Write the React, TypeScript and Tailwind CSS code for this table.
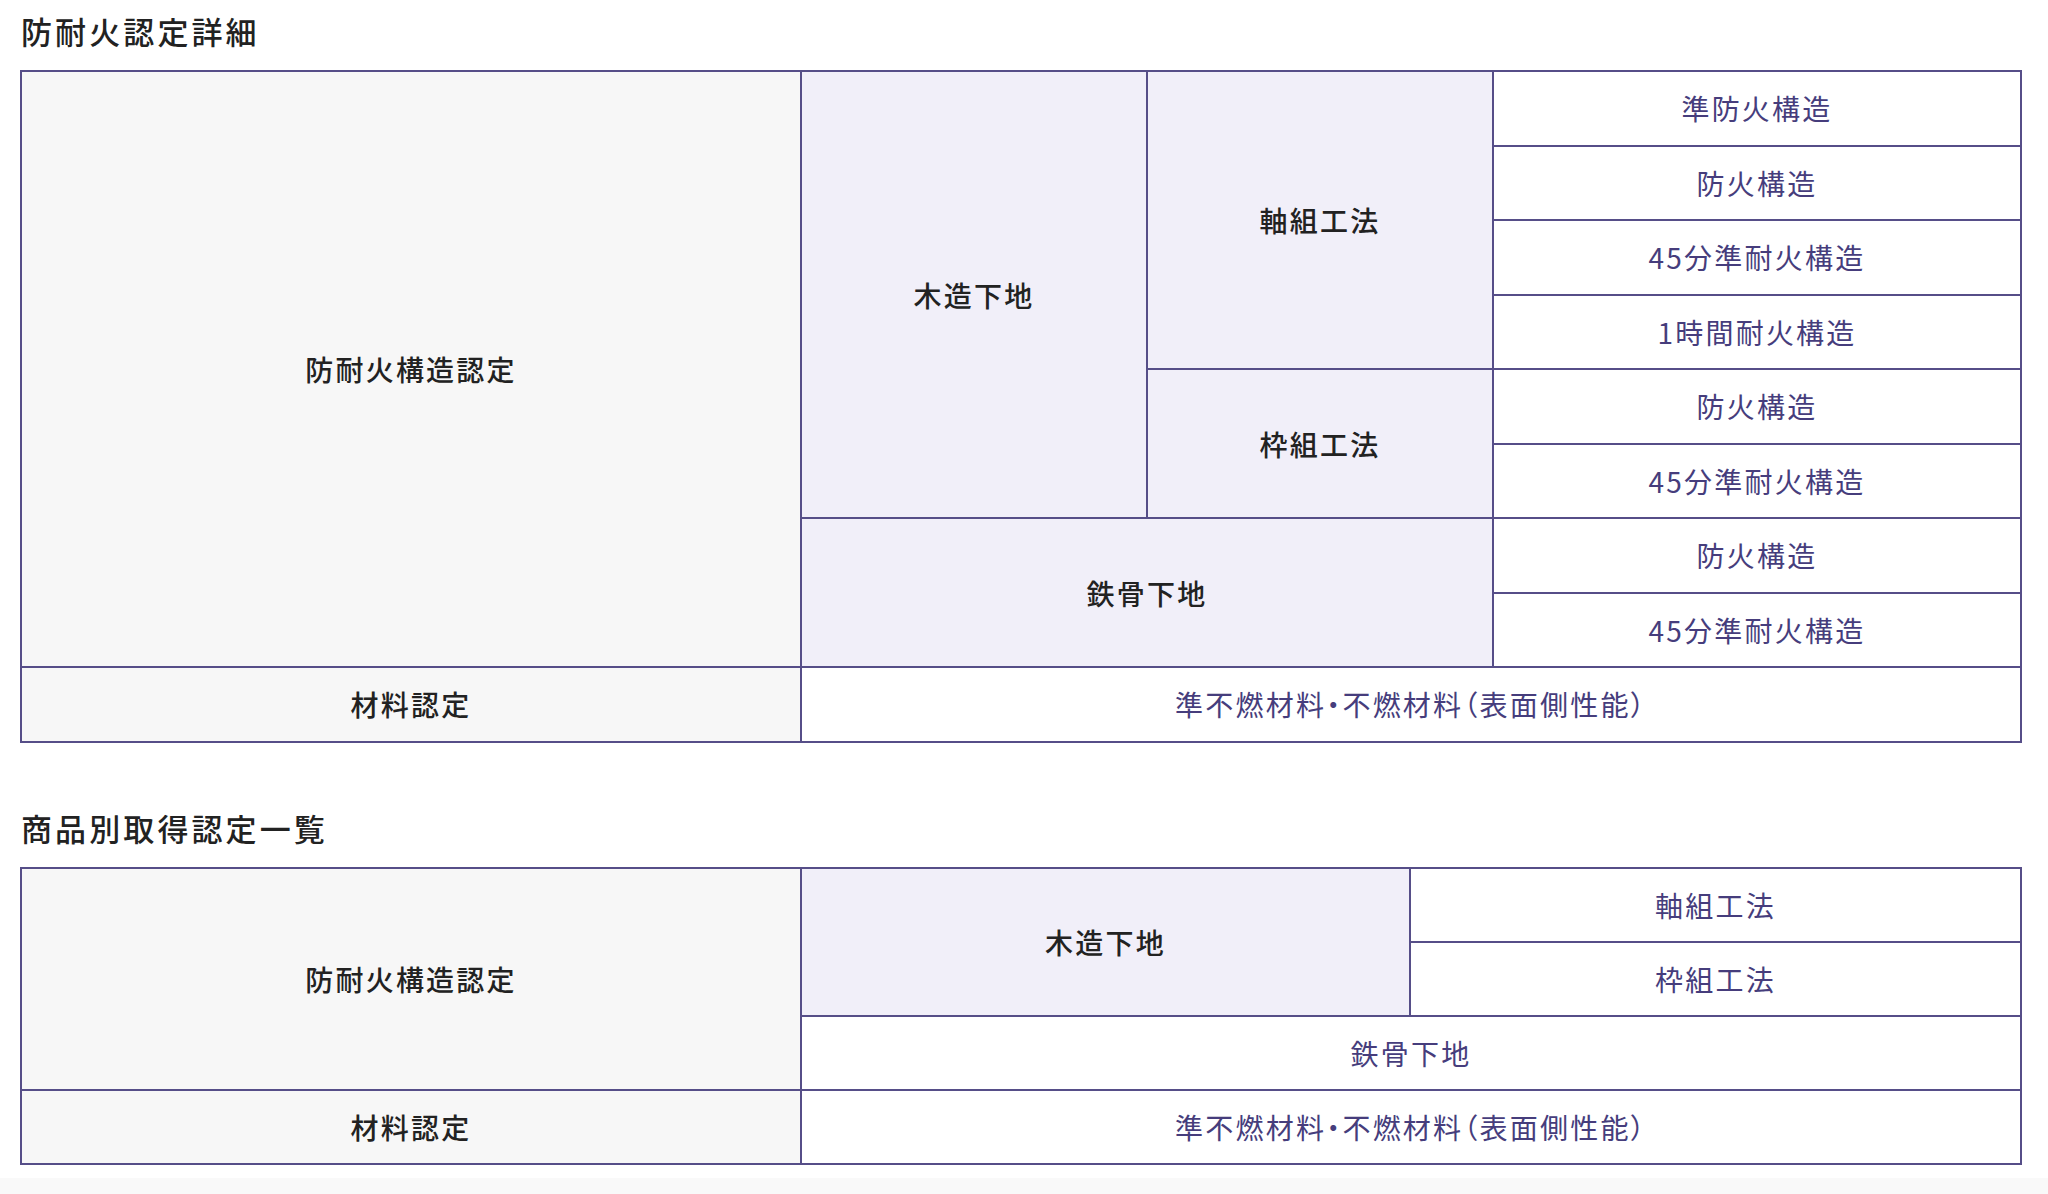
const head1 = "bg-[#f7f7f7] text-[#222] font-medium";
const head2 = "bg-[#f1eff9] text-[#222] font-medium";
const body = "bg-white text-[#463d7c]";

function Cell({ className, children }: { className: string; children: React.ReactNode }) {
  return (
    <div className={`flex items-center justify-center text-center ${className}`}>
      {children}
    </div>
  );
}

function Title({ children }: { children: React.ReactNode }) {
  return (
    <h2 className="text-[31px] leading-[40px] tracking-[0.1em] text-[#222] font-medium mb-[19px] pl-[1px]">
      {children}
    </h2>
  );
}

export default function App() {
  return (
    <div
      className="min-h-[1194px] bg-white pt-[11px] [font-feature-settings:'palt'] text-[28px] tracking-[0.08em]"
      style={{ fontFamily: '"Noto Sans CJK JP", "Noto Sans", sans-serif' }}
    >
      <div className="w-[2002px] ml-[20px]">
        <Title>防耐火認定詳細</Title>
        <div className="grid grid-cols-[778px_344px_344px_526px] grid-rows-[repeat(9,72.5px)] gap-[2px] p-[2px] bg-[#564e88]">
          <Cell className={`${head1} row-span-8`}>防耐火構造認定</Cell>
          <Cell className={`${head2} row-span-6`}>木造下地</Cell>
          <Cell className={`${head2} row-span-4`}>軸組工法</Cell>
          <Cell className={body}>準防火構造</Cell>
          <Cell className={body}>防火構造</Cell>
          <Cell className={body}>45分準耐火構造</Cell>
          <Cell className={body}>1時間耐火構造</Cell>
          <Cell className={`${head2} row-span-2`}>枠組工法</Cell>
          <Cell className={body}>防火構造</Cell>
          <Cell className={body}>45分準耐火構造</Cell>
          <Cell className={`${head2} col-span-2 row-span-2`}>鉄骨下地</Cell>
          <Cell className={body}>防火構造</Cell>
          <Cell className={body}>45分準耐火構造</Cell>
          <Cell className={head1}>材料認定</Cell>
          <Cell className={`${body} col-span-3`}>準不燃材料・不燃材料（表面側性能）</Cell>
        </div>

        <div className="mt-[65px]">
          <Title>商品別取得認定一覧</Title>
          <div className="grid grid-cols-[778px_607px_609px] grid-rows-[repeat(4,72px)] gap-[2px] p-[2px] bg-[#564e88]">
            <Cell className={`${head1} row-span-3`}>防耐火構造認定</Cell>
            <Cell className={`${head2} row-span-2`}>木造下地</Cell>
            <Cell className={body}>軸組工法</Cell>
            <Cell className={body}>枠組工法</Cell>
            <Cell className={`${body} col-span-2`}>鉄骨下地</Cell>
            <Cell className={head1}>材料認定</Cell>
            <Cell className={`${body} col-span-2`}>準不燃材料・不燃材料（表面側性能）</Cell>
          </div>
        </div>
      </div>
      <div className="mt-[13px] h-[16px] bg-[#f9f9f9]" />
    </div>
  );
}
